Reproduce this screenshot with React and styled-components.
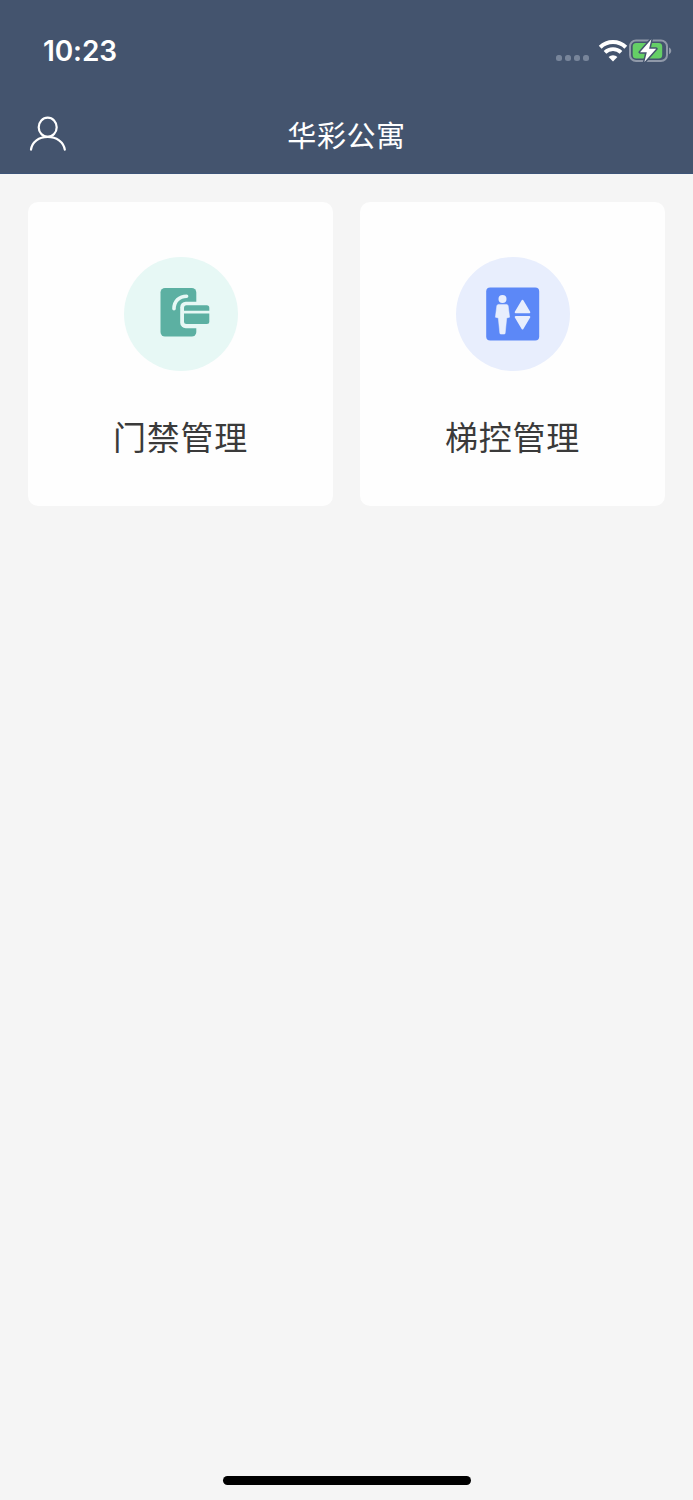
import React from 'react';
import styled, { createGlobalStyle } from 'styled-components';

const GlobalStyle = createGlobalStyle`
  * {
    box-sizing: border-box;
  }

  body {
    margin: 0;
    background-color: #f5f5f5;
    font-family: 'Noto Sans', 'Noto Sans CJK SC', sans-serif;
  }
`;

const Page = styled.div`
  display: flex;
  flex-direction: column;
  height: 1500px;
  background-color: #f5f5f5;
`;

const Header = styled.header`
  height: 174px;
  background-color: #44546e;
  border-bottom: 1px solid #3d5478;
  color: #fff;
`;

const StatusBar = styled.div`
  display: flex;
  justify-content: space-between;
  height: 94px;
  padding: 34px 21px 0 43px;
`;

const Time = styled.div`
  font-family: Inter, sans-serif;
  font-size: 28px;
  font-weight: 600;
  line-height: 34px;
  letter-spacing: -0.1px;
`;

const StatusIcons = styled.div`
  display: flex;
  padding-top: 4px;

  svg {
    display: block;
  }
`;

const Signal = styled.div`
  display: flex;
  gap: 3px;
  padding-top: 17px;
  margin-right: 9px;
`;

const SignalDot = styled.span`
  width: 6px;
  height: 6px;
  border-radius: 2.5px;
  background-color: #78859a;
`;

const NavBar = styled.div`
  display: grid;
  grid-template-columns: 80px 1fr 80px;
  align-items: center;
  height: 79px;
`;

const UserButton = styled.button`
  width: 40px;
  height: 40px;
  margin-left: 28px;
  padding: 0;
  border: none;
  background: none;
  color: #fff;
  cursor: pointer;

  svg {
    display: block;
  }
`;

const Title = styled.h1`
  margin: 0;
  font-family: 'Noto Sans CJK SC', sans-serif;
  font-size: 29px;
  font-weight: 400;
  line-height: 40px;
  letter-spacing: 0.6px;
  text-align: center;
`;

const CardGrid = styled.main`
  display: grid;
  grid-template-columns: 1fr 1fr;
  gap: 27px;
  flex: 1;
  align-content: start;
  padding: 28px 28px 0;
`;

const Card = styled.div`
  display: flex;
  flex-direction: column;
  align-items: center;
  height: 304px;
  padding-top: 55px;
  border-radius: 10px;
  background-color: #fefefe;
  cursor: pointer;
`;

const IconCircle = styled.div`
  width: 114px;
  height: 114px;
  border-radius: 50%;
  background-color: ${(props) => props.$color};

  svg {
    display: block;
  }
`;

const CardLabel = styled.div`
  margin-top: 41px;
  font-family: 'Noto Sans CJK SC', sans-serif;
  font-size: 33px;
  line-height: 48px;
  letter-spacing: 0.8px;
  color: #3a3a3a;
`;

const HomeIndicator = styled.div`
  align-self: center;
  width: 248px;
  height: 9px;
  margin-bottom: 15px;
  border-radius: 5px;
  background-color: #000;
`;

const WifiIcon = () => (
  <svg width="30" height="26" viewBox="0 0 30 26" fill="none" stroke="#fff">
    <path d="M2.2 9.3a18.3 18.3 0 0 1 25.6 0" strokeWidth="4" />
    <path d="M7 14.4a11.6 11.6 0 0 1 16 0" strokeWidth="3.8" />
    <path d="M15 23.6l-4.4-4.5a6.3 6.3 0 0 1 8.8 0z" fill="#fff" stroke="none" />
  </svg>
);

const BatteryIcon = () => (
  <svg width="44" height="26" viewBox="0 0 44 26">
    <rect x="2" y="2.5" width="37" height="20.5" rx="6" fill="none" stroke="#9099a9" strokeWidth="2" />
    <path d="M41 9.5c3 1.2 3 5.5 0 6.7z" fill="#9099a9" />
    <rect x="4.7" y="5" width="29.5" height="15.5" rx="3.5" fill="#65cf66" />
    <path
      d="M23.4 1.2L12 14.2h6.8L16.4 24 28.2 10.8h-7.1z"
      fill="#fff"
      stroke="#44546e"
      strokeWidth="3"
      strokeLinejoin="round"
      paintOrder="stroke"
    />
  </svg>
);

const UserIcon = () => (
  <svg width="40" height="40" viewBox="0 0 40 40" fill="none" stroke="currentColor" strokeWidth="2.2">
    <ellipse cx="19.7" cy="13.2" rx="9" ry="9.6" />
    <path d="M3 35.6C4 27.8 11 22.8 19.7 22.8S35.6 27.8 36.8 35.6" strokeLinecap="round" />
  </svg>
);

const DoorIcon = () => (
  <svg width="114" height="114" viewBox="0 0 114 114">
    <rect x="36.5" y="31" width="35.8" height="48.6" rx="4.5" fill="#5cb0a2" />
    <path d="M50 51.8c0-7.7 5.3-12.6 12.6-12.6" fill="none" stroke="#e7f8f5" strokeWidth="3.6" strokeLinecap="round" />
    <path d="M76 44.7H61.7a5.5 5.5 0 0 0-5.5 5.5v15.5a5.5 5.5 0 0 0 5.5 5.5H76z" fill="#e7f8f5" />
    <path d="M60 53.8v-3a2.5 2.5 0 0 1 2.5-2.5h20.3a2.5 2.5 0 0 1 2.5 2.5v3z" fill="#5cb0a2" />
    <path d="M60 56.4h25.3v8.1a2.5 2.5 0 0 1-2.5 2.5H62.5a2.5 2.5 0 0 1-2.5-2.5z" fill="#5cb0a2" />
  </svg>
);

const ElevatorIcon = () => (
  <svg width="114" height="114" viewBox="0 0 114 114">
    <rect x="30.2" y="30.5" width="53" height="53" rx="4" fill="#5c88f7" />
    <g fill="#e8eefd" stroke="#e8eefd" strokeLinejoin="round">
      <circle cx="46.5" cy="42" r="4" stroke="none" />
      <path
        d="M42.8 47.4h7.4c1.2 0 1.8.6 2 1.6l1.4 11.2-2.9.7-1.5 15c-.1.9-.5 1.2-1.2 1.2h-3c-.7 0-1.1-.3-1.2-1.2l-1.5-15-2.9-.7L40.8 49c.2-1 .8-1.6 2-1.6z"
        strokeWidth="0.5"
      />
      <path d="M66.5 43.8l6.8 11.5H59.7z" strokeWidth="2" />
      <path d="M66.5 71.5L59.7 60h13.6z" strokeWidth="2" />
    </g>
  </svg>
);

const menus = [
  { id: 'door', label: '门禁管理', color: '#e7f8f5', Icon: DoorIcon },
  { id: 'elevator', label: '梯控管理', color: '#e8eefd', Icon: ElevatorIcon },
];

const App = () => {
  return (
    <>
      <GlobalStyle />
      <Page>
        <Header>
          <StatusBar>
            <Time>10:23</Time>
            <StatusIcons>
              <Signal>
                {[0, 1, 2, 3].map((dot) => (
                  <SignalDot key={dot} />
                ))}
              </Signal>
              <WifiIcon />
              <BatteryIcon />
            </StatusIcons>
          </StatusBar>
          <NavBar>
            <UserButton>
              <UserIcon />
            </UserButton>
            <Title>华彩公寓</Title>
          </NavBar>
        </Header>
        <CardGrid>
          {menus.map(({ id, label, color, Icon }) => (
            <Card key={id}>
              <IconCircle $color={color}>
                <Icon />
              </IconCircle>
              <CardLabel>{label}</CardLabel>
            </Card>
          ))}
        </CardGrid>
        <HomeIndicator />
      </Page>
    </>
  );
};

export default App;
